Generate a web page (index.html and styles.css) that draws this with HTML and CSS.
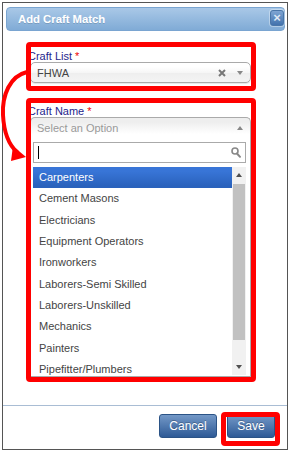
FILE: index.html
```html
<!DOCTYPE html>
<html lang="en">
<head>
    <meta charset="UTF-8">
    <title>Add Craft Match</title>
    <link rel="stylesheet" href="styles.css">
</head>
<body>
    <div class="dialog">
        <div class="titlebar">
            <span class="title">Add Craft Match</span>
            <span class="close">&times;</span>
        </div>

        <div class="content">
            <!-- Craft List -->
            <div class="field mark mark-list">
                <label class="label">Craft List <span class="req">*</span></label>
                <div class="select">
                    <span class="value">FHWA</span>
                    <svg class="clear" width="8" height="8" viewBox="0 0 8 8"><path d="M1 1L7 7M7 1L1 7" stroke="#777" stroke-width="2"/></svg>
                    <span class="caret caret-down"></span>
                </div>
            </div>

            <!-- Craft Name -->
            <div class="field mark mark-name">
                <label class="label">Craft Name <span class="req">*</span></label>
                <div class="select select-open">
                    <span class="value placeholder">Select an Option</span>
                    <span class="caret caret-up"></span>
                </div>
                <div class="drop">
                    <div class="search">
                        <span class="cursor"></span>
                        <svg class="magnifier" width="10" height="11" viewBox="0 0 10 11"><circle cx="4" cy="4" r="3" fill="none" stroke="#888" stroke-width="1.6"/><path d="M6 6.5L9 9.8" stroke="#888" stroke-width="2" stroke-linecap="round"/></svg>
                    </div>
                    <div class="list">
                        <div class="options">
                            <div class="option active">Carpenters</div>
                            <div class="option">Cement Masons</div>
                            <div class="option">Electricians</div>
                            <div class="option">Equipment Operators</div>
                            <div class="option">Ironworkers</div>
                            <div class="option">Laborers-Semi Skilled</div>
                            <div class="option">Laborers-Unskilled</div>
                            <div class="option">Mechanics</div>
                            <div class="option">Painters</div>
                            <div class="option">Pipefitter/Plumbers</div>
                        </div>
                        <div class="scrollbar">
                            <div class="scroll-btn"><span class="caret caret-up dark"></span></div>
                            <div class="thumb"></div>
                            <div class="scroll-btn bottom"><span class="caret caret-down dark"></span></div>
                        </div>
                    </div>
                </div>
            </div>
        </div>

        <div class="footer">
            <button class="btn btn-cancel">Cancel</button>
            <div class="mark mark-save">
                <button class="btn btn-save">Save</button>
            </div>
        </div>
    </div>

    <!-- annotation arrow -->
    <svg class="arrow" width="32" height="170" viewBox="0 0 32 170">
        <path d="M27 72 C 10 76, 2 95, 3 115 C 4 134, 9 145, 17 152" fill="none" stroke="#f00" stroke-width="4" stroke-linecap="round"/>
        <polygon points="13,146 26,157 11,161" fill="#f00"/>
    </svg>
</body>
</html>
```

FILE: styles.css
```css
body {
    margin: 0;
    background: #fff;
    font-family: "Liberation Sans", Arial, sans-serif;
}

.dialog {
    margin: 2px 0 0 2px;
    width: 286px;
    height: 448px;
    box-sizing: border-box;
    border: 1px solid #555;
    padding: 4px 2px 0 3px;
    display: flex;
    flex-direction: column;
    background: #fff;
}

.titlebar {
    height: 24px;
    box-sizing: border-box;
    border: 1px solid #7aa5d1;
    border-radius: 4px;
    background: linear-gradient(#a9c8e7, #80abd6);
    display: flex;
    align-items: flex-start;
    padding-left: 11px;
}

.title {
    flex: 1;
    line-height: 22px;
    font-size: 11.3px;
    font-weight: bold;
    color: #fff;
    text-shadow: 0 1px 0 rgba(0, 0, 0, 0.15);
}

.close {
    width: 14px;
    height: 16px;
    margin-top: 2px;
    box-sizing: border-box;
    border: 1px solid #4a76a8;
    border-radius: 3px;
    background: linear-gradient(#7fa5d3, #4272ad);
    box-shadow: 0 0 0 1px rgba(255, 255, 255, 0.35);
    color: #dfe9f5;
    font-size: 13px;
    font-weight: bold;
    line-height: 13px;
    text-align: center;
}

.content {
    padding: 19px 34px 0 24px;
}

.field {
    position: relative;
}

.field + .field {
    margin-top: 22px;
}

.label {
    display: block;
    margin-left: -2px;
    font-size: 11px;
    line-height: 12px;
    color: #1e1e8c;
}

.req {
    color: #e00;
}

.select {
    height: 21px;
    box-sizing: border-box;
    border: 1px solid #aaa;
    border-radius: 5px;
    background: linear-gradient(#fff 20%, #f6f6f6 50%, #eee 52%, #f4f4f4 100%);
    box-shadow: 0 1px 1px rgba(0, 0, 0, 0.1);
    display: flex;
    align-items: center;
    padding: 0 7px 0 6px;
    font-size: 11px;
    color: #444;
}

.value {
    flex: 1;
}

.placeholder {
    color: #999;
}

.clear {
    margin-right: 11px;
}

.select-open {
    border-radius: 5px 5px 0 0;
    border-bottom: none;
    background: linear-gradient(#eee 20%, #fff 80%);
    box-shadow: none;
}

.caret {
    width: 0;
    height: 0;
    border-left: 3px solid transparent;
    border-right: 3px solid transparent;
}

.caret-down {
    border-top: 4px solid #888;
}

.caret-up {
    border-bottom: 4px solid #888;
}

.caret-up.dark {
    border-bottom-color: #505050;
}

.caret-down.dark {
    border-top-color: #505050;
}

.drop {
    height: 239px;
    box-sizing: border-box;
    border: 1px solid #aaa;
    border-top: none;
    padding: 4px 4px 1px 2px;
    background: #fff;
}

.search {
    height: 21px;
    box-sizing: border-box;
    border: 1px solid #aaa;
    display: flex;
    align-items: center;
    padding: 0 4px;
}

.cursor {
    width: 1px;
    height: 13px;
    background: #000;
    margin-right: auto;
}

.list {
    margin-top: 4px;
    height: 208px;
    overflow: hidden;
    display: flex;
}

.options {
    flex: 1;
}

.option {
    height: 21.33px;
    line-height: 21.33px;
    padding-left: 6px;
    font-size: 11px;
    color: #444;
    white-space: nowrap;
}

.option.active {
    background: linear-gradient(#3875d7 20%, #2a62bc 90%);
    color: #fff;
}

.scrollbar {
    width: 14px;
    background: #f1f1f1;
    display: flex;
    flex-direction: column;
}

.scroll-btn {
    height: 16px;
    display: flex;
    align-items: center;
    justify-content: center;
}

.scroll-btn.bottom {
    margin-top: auto;
}

.thumb {
    margin: 1px 1px 0;
    height: 156px;
    background: #c1c1c1;
}

.footer {
    margin: auto -2px 0 -3px;
    height: 44px;
    box-sizing: border-box;
    border-top: 1px solid #a9bdd4;
    padding: 8px 12px 0 0;
    display: flex;
    justify-content: flex-end;
    align-items: flex-start;
    gap: 10px;
}

.btn {
    height: 24px;
    padding: 0;
    border: 1px solid #2b5386;
    border-radius: 3px;
    background: linear-gradient(#7398c7, #2e5a96);
    color: #fff;
    font-family: "Liberation Sans", Arial, sans-serif;
    font-size: 12px;
    text-shadow: 0 -1px 0 rgba(0, 0, 0, 0.25);
}

.btn-cancel {
    width: 58px;
}

.btn-save {
    width: 48px;
    display: block;
}

/* red annotation frames */
.mark {
    position: relative;
}

.mark::after {
    content: "";
    position: absolute;
    border: 5px solid #f00;
    border-radius: 4px;
    pointer-events: none;
}

.mark-list::after {
    top: -8px;
    left: -4px;
    right: -5px;
    bottom: -8px;
}

.mark-name::after {
    top: -7px;
    left: -4px;
    right: -5px;
    bottom: -5px;
}

.mark-save::after {
    top: -2px;
    left: -6px;
    right: -5px;
    bottom: -8px;
}

.arrow {
    position: absolute;
    top: 0;
    left: 0;
}
```
